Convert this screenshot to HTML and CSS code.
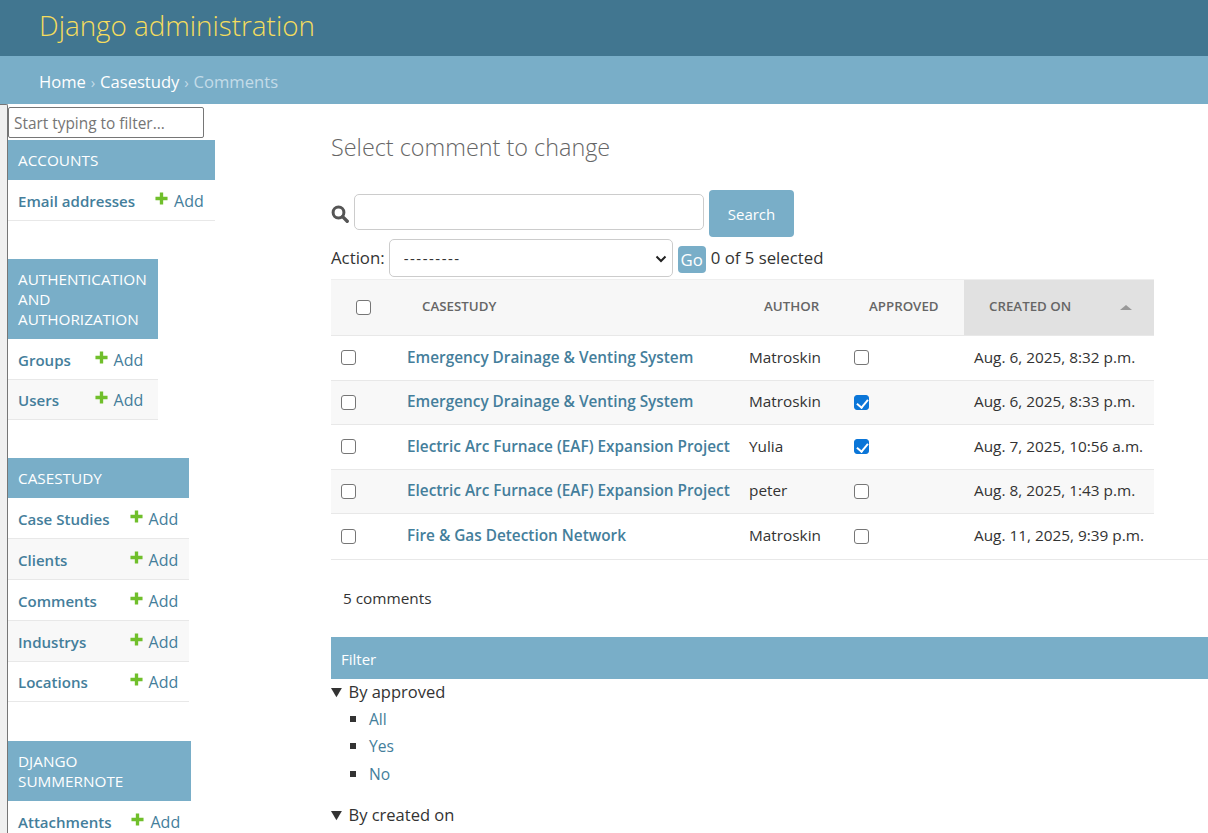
FILE: index.html
```html
<!DOCTYPE html>
<html lang="en">
<head>
  <meta charset="UTF-8" />
  <meta name="viewport" content="width=device-width, initial-scale=1" />
  <title>Select comment to change | Django site admin</title>
  <link rel="stylesheet" href="styles.css">
</head>
<body>
  <svg class="icon-defs" width="0" height="0" aria-hidden="true">
    <symbol id="plus" viewBox="0 0 14 14">
      <path d="M5.2 0.5h3.6v4.7h4.7v3.6H8.8v4.7H5.2V8.8H0.5V5.2h4.7z" fill="#70bf2b"/>
    </symbol>
  </svg>

  <header class="site-header">
    <h1 class="branding">Django administration</h1>
  </header>
  <nav class="breadcrumbs">
    <a href="#">Home</a> <span class="sep">›</span> <a href="#">Casestudy</a> <span class="sep">›</span> Comments
  </nav>

  <div class="main">
    <button class="toggle-nav" aria-label="Toggle navigation"></button>

    <aside class="sidebar">
      <input class="nav-filter" type="search" placeholder="Start typing to filter...">

      <table class="app-table">
        <caption>Accounts</caption>
        <tr><th><a href="#">Email addresses</a></th><td><a class="addlink" href="#"><svg><use href="#plus"/></svg>Add</a></td></tr>
      </table>

      <table class="app-table">
        <caption>Authentication and Authorization</caption>
        <tr><th><a href="#">Groups</a></th><td><a class="addlink" href="#"><svg><use href="#plus"/></svg>Add</a></td></tr>
        <tr><th><a href="#">Users</a></th><td><a class="addlink" href="#"><svg><use href="#plus"/></svg>Add</a></td></tr>
      </table>

      <table class="app-table">
        <caption>Casestudy</caption>
        <tr><th><a href="#">Case Studies</a></th><td><a class="addlink" href="#"><svg><use href="#plus"/></svg>Add</a></td></tr>
        <tr><th><a href="#">Clients</a></th><td><a class="addlink" href="#"><svg><use href="#plus"/></svg>Add</a></td></tr>
        <tr><th><a href="#">Comments</a></th><td><a class="addlink" href="#"><svg><use href="#plus"/></svg>Add</a></td></tr>
        <tr><th><a href="#">Industrys</a></th><td><a class="addlink" href="#"><svg><use href="#plus"/></svg>Add</a></td></tr>
        <tr><th><a href="#">Locations</a></th><td><a class="addlink" href="#"><svg><use href="#plus"/></svg>Add</a></td></tr>
      </table>

      <table class="app-table app-table-last">
        <caption>Django Summernote</caption>
        <tr><th><a href="#">Attachments</a></th><td><a class="addlink" href="#"><svg><use href="#plus"/></svg>Add</a></td></tr>
      </table>
    </aside>

    <main class="content">
      <h1 class="page-title">Select comment to change</h1>

      <form class="search-row">
        <svg class="search-icon" viewBox="0 0 18 18" aria-hidden="true">
          <circle cx="7.5" cy="7.5" r="5.4" fill="none" stroke="#555" stroke-width="3"/>
          <path d="M11.6 11.6l4.6 4.6" stroke="#555" stroke-width="3.4" stroke-linecap="round"/>
        </svg>
        <input class="search-input" type="text">
        <button class="btn search-btn" type="button">Search</button>
      </form>

      <div class="actions">
        <label class="action-text" for="action">Action:</label>
        <span class="select-wrap">
          <select class="action-select" id="action"><option>---------</option></select>
          <svg class="select-arrow" viewBox="0 0 12 8" aria-hidden="true">
            <path d="M1.5 1.5L6 6l4.5-4.5" fill="none" stroke="#222" stroke-width="2"/>
          </svg>
        </span>
        <button class="btn go-btn" type="button">Go</button>
        <span class="action-text">0 of 5 selected</span>
      </div>

      <div class="results">
        <table class="result-list">
          <colgroup>
            <col class="col-check"><col class="col-case"><col class="col-author"><col class="col-approved"><col class="col-created">
          </colgroup>
          <thead>
            <tr>
              <th><input type="checkbox"></th>
              <th>Casestudy</th>
              <th>Author</th>
              <th>Approved</th>
              <th class="sorted">Created on<span class="sort-arrow"></span></th>
            </tr>
          </thead>
          <tbody>
            <tr>
              <td><input type="checkbox"></td>
              <td><a href="#">Emergency Drainage &amp; Venting System</a></td>
              <td>Matroskin</td>
              <td><input type="checkbox"></td>
              <td>Aug. 6, 2025, 8:32 p.m.</td>
            </tr>
            <tr class="alt">
              <td><input type="checkbox"></td>
              <td><a href="#">Emergency Drainage &amp; Venting System</a></td>
              <td>Matroskin</td>
              <td><input type="checkbox" checked></td>
              <td>Aug. 6, 2025, 8:33 p.m.</td>
            </tr>
            <tr>
              <td><input type="checkbox"></td>
              <td><a href="#">Electric Arc Furnace (EAF) Expansion Project</a></td>
              <td>Yulia</td>
              <td><input type="checkbox" checked></td>
              <td>Aug. 7, 2025, 10:56 a.m.</td>
            </tr>
            <tr class="alt">
              <td><input type="checkbox"></td>
              <td><a href="#">Electric Arc Furnace (EAF) Expansion Project</a></td>
              <td>peter</td>
              <td><input type="checkbox"></td>
              <td>Aug. 8, 2025, 1:43 p.m.</td>
            </tr>
            <tr>
              <td><input type="checkbox"></td>
              <td><a href="#">Fire &amp; Gas Detection Network</a></td>
              <td>Matroskin</td>
              <td><input type="checkbox"></td>
              <td>Aug. 11, 2025, 9:39 p.m.</td>
            </tr>
          </tbody>
        </table>
      </div>

      <p class="paginator">5 comments</p>

      <section class="filter">
        <h2>Filter</h2>
        <details open>
          <summary>By approved</summary>
          <ul>
            <li><a href="#">All</a></li>
            <li><a href="#">Yes</a></li>
            <li><a href="#">No</a></li>
          </ul>
        </details>
        <details open>
          <summary>By created on</summary>
        </details>
      </section>
    </main>
  </div>
</body>
</html>
```

FILE: styles.css
```css
* {
  box-sizing: border-box;
}

html, body {
  height: 833px;
  overflow: hidden;
}

body {
  margin: 0;
  font-family: "Open Sans", "Noto Sans", sans-serif;
  font-size: 15px;
  color: #333;
  background: #fff;
}

a {
  color: #447e9b;
  text-decoration: none;
}

.icon-defs {
  position: absolute;
}

.site-header {
  height: 56px;
  background: #417690;
  padding: 6px 39px 0;
}

.branding {
  margin: 0;
  font-size: 27.8px;
  font-weight: 300;
  line-height: 38px;
  color: #f5dd5d;
}

.breadcrumbs {
  height: 48px;
  background: #79aec8;
  padding: 0 39px;
  font-size: 16.6px;
  line-height: 51px;
  color: #c4dce8;
}

.breadcrumbs a {
  color: #fff;
}

.breadcrumbs .sep {
  margin: 0 0.5px;
  font-size: 15px;
}

.main {
  display: flex;
  height: 729px;
}

.toggle-nav {
  flex: 0 0 8px;
  padding: 0;
  background: #f0f0f0;
  border: 0;
  border-top: 1px solid #767676;
  border-right: 1px solid #767676;
  border-top-right-radius: 2px;
}

.sidebar {
  flex: 0 0 323px;
  padding-top: 3px;
  overflow: hidden;
}

.nav-filter {
  display: block;
  width: 196px;
  height: 31px;
  margin: 0 0 2px;
  padding: 2px 5px 0;
  font: inherit;
  font-size: 15.4px;
  border: 1px solid #767676;
  border-radius: 2px;
  outline: none;
}

.nav-filter::placeholder {
  color: #757575;
}

.app-table {
  border-collapse: separate;
  border-spacing: 0;
  margin-bottom: 38px;
  margin-left: -1px;
}

.app-table-last {
  margin-top: 39px;
}

.app-table caption {
  padding: 10px 11px;
  background: #79aec8;
  color: #fff;
  font-size: 15.3px;
  line-height: 20px;
  text-align: left;
  text-transform: uppercase;
}

.app-table th,
.app-table td {
  height: 40.8px;
  padding: 2px 11px 0 10px;
  border-bottom: 1px solid #e8e8e8;
  font-weight: 400;
  text-align: left;
  white-space: nowrap;
}

.app-table th {
  padding-left: 11px;
  padding-right: 10px;
  font-size: 15.05px;
  font-weight: 600;
}

.app-table td {
  font-size: 16px;
}

.app-table tr:nth-child(even) {
  background: #f8f8f8;
}

.addlink {
  display: flex;
  align-items: center;
}

.addlink svg {
  width: 13px;
  height: 13px;
  margin: -5px 6px 0 0;
}

.content {
  flex: 1;
  min-width: 0;
}

.page-title {
  margin: 25px 0 25px;
  font-size: 23.4px;
  font-weight: 300;
  line-height: 36px;
  color: #666;
}

.search-row {
  display: flex;
  align-items: center;
  height: 47px;
}

.search-icon {
  width: 18px;
  height: 18px;
  margin: 0 5px 0 0;
}

.search-input {
  width: 350px;
  height: 36px;
  margin-bottom: 4px;
  padding: 0 8px;
  border: 1px solid #ccc;
  border-radius: 5px;
}

.btn {
  border: 0;
  border-radius: 4px;
  background: #79aec8;
  color: #fff;
  font: inherit;
  padding: 0;
}

.search-btn {
  width: 85px;
  height: 47px;
  margin-left: 5px;
}

.actions {
  display: flex;
  align-items: center;
  height: 38px;
  margin-top: 2px;
  font-size: 16.8px;
}

.action-text {
  padding-bottom: 2px;
}

.select-wrap {
  position: relative;
  display: block;
  margin-left: 4px;
}

.action-select {
  display: block;
  width: 284px;
  height: 38px;
  padding: 0 14px;
  font: 15px "Open Sans", sans-serif;
  letter-spacing: 1.5px;
  color: #333;
  background: #fff;
  border: 1px solid #ccc;
  border-radius: 5px;
  appearance: none;
}

.select-arrow {
  position: absolute;
  right: 6px;
  top: 16px;
  width: 12px;
  height: 8px;
}

.go-btn {
  width: 28px;
  height: 27px;
  margin: 3px 5px 0 5px;
}

.results {
  margin-top: 2px;
  padding-bottom: 1px;
  border-bottom: 1px solid #e8e8e8;
}

.result-list {
  width: 823px;
  table-layout: fixed;
  border-collapse: collapse;
}

.col-check { width: 66px; }
.col-case { width: 342px; }
.col-author { width: 105px; }
.col-approved { width: 120px; }
.col-created { width: 190px; }

.result-list th {
  height: 56px;
  padding: 0 0 3px 25px;
  background: #f7f7f7;
  border-top: 1px solid #eee;
  border-bottom: 1px solid #e8e8e8;
  color: #666;
  font-size: 13.3px;
  font-weight: 600;
  text-align: left;
  text-transform: uppercase;
}

.result-list th.sorted {
  position: relative;
  background: #e1e1e1;
}

.sort-arrow {
  position: absolute;
  right: 22px;
  top: 25px;
  border: 6px solid transparent;
  border-top: 0;
  border-bottom: 5px solid #999;
}

.result-list td {
  height: 44.5px;
  padding: 0 0 2px 10px;
  border-bottom: 1px solid #e8e8e8;
  font-size: 15.35px;
  white-space: nowrap;
}

.result-list tr:last-child td {
  border-bottom: 0;
}

.result-list td a {
  font-weight: 600;
}

.result-list tr.alt {
  background: #f8f8f8;
}

.result-list input {
  display: block;
  position: relative;
  width: 15px;
  height: 15px;
  margin: 2px 0 0;
  background: #fff;
  border: 1px solid #767676;
  border-radius: 3px;
  appearance: none;
}

.result-list input:checked {
  background: #0b76d8;
  border-color: #0b76d8;
}

.result-list input:checked::after {
  content: "";
  position: absolute;
  left: 4px;
  top: 1px;
  width: 5px;
  height: 9px;
  border: solid #fff;
  border-width: 0 2px 2px 0;
  transform: rotate(40deg);
}

.paginator {
  margin: 0;
  padding: 0 12px;
  height: 77px;
  font-size: 15.35px;
  line-height: 77px;
}

.filter h2 {
  margin: 0;
  height: 42px;
  padding: 0 10px;
  background: #79aec8;
  color: #fff;
  font-size: 15px;
  font-weight: 400;
  line-height: 44px;
}

.filter summary {
  font-size: 16.5px;
  line-height: 26px;
  color: #333;
}

.filter ul {
  margin: 0 0 14px;
  padding: 0 0 0 19px;
  list-style: none;
}

.filter li {
  display: flex;
  align-items: center;
  height: 27.5px;
  font-size: 15.6px;
}

.filter li::before {
  content: "";
  flex: 0 0 6px;
  height: 6px;
  margin: 0 13px 0 0;
  background: #333;
}
```
